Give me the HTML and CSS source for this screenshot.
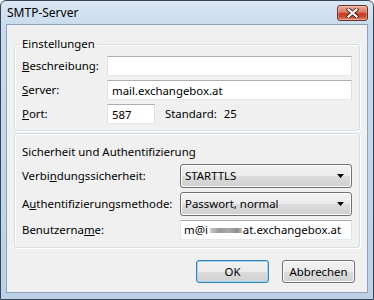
FILE: index.html
```html
<!DOCTYPE html>
<html lang="de">
  <head>
    <meta charset="UTF-8" />
    <meta name="viewport" content="width=device-width, initial-scale=1.0" />
    <title>SMTP-Server</title>
    <link rel="stylesheet" href="styles.css">
  </head>
  <body>
    <div class="window">
      <div class="titlebar">
        <span class="title">SMTP-Server</span>
        <button class="close-btn" title="Schließen">
          <svg width="13" height="10" viewBox="0 0 13 10">
            <path d="M2.5 1.5 L10.5 8.5 M10.5 1.5 L2.5 8.5" stroke="#4a1a12" stroke-width="3.8" stroke-linecap="square" fill="none" />
            <path d="M2.5 1.5 L10.5 8.5 M10.5 1.5 L2.5 8.5" stroke="#fff" stroke-width="2.2" stroke-linecap="square" fill="none" />
          </svg>
        </button>
      </div>

      <div class="client">
        <fieldset class="group">
          <legend>Einstellungen</legend>
          <div class="form-grid settings">
            <label for="desc"><u>B</u>eschreibung:</label>
            <input type="text" class="field" id="desc">

            <label for="server"><u>S</u>erver:</label>
            <input type="text" class="field" id="server" value="mail.exchangebox.at">

            <label for="port"><u>P</u>ort:</label>
            <div class="port-row">
              <input type="text" class="field port" id="port" value="587">
              <span>Standard:</span>
              <span>25</span>
            </div>
          </div>
        </fieldset>

        <div class="group security">
          <div class="caption">Sicherheit und Authentifizierung</div>
          <div class="form-grid auth">
            <label>Verbi<u>n</u>dungssicherheit:</label>
            <div class="dropdown">
              <span>STARTTLS</span>
              <svg class="arrow" width="7" height="4" viewBox="0 0 7 4"><path d="M0 0 H7 L3.5 4 Z" fill="#000" /></svg>
            </div>

            <label>A<u>u</u>thentifizierungsmethode:</label>
            <div class="dropdown">
              <span>Passwort, normal</span>
              <svg class="arrow" width="7" height="4" viewBox="0 0 7 4"><path d="M0 0 H7 L3.5 4 Z" fill="#000" /></svg>
            </div>

            <label>Benutzerna<u>m</u>e:</label>
            <div class="field user">m@i<span class="redacted"></span>at.exchangebox.at</div>
          </div>
        </div>

        <div class="buttons">
          <button class="btn btn-default">OK</button>
          <button class="btn">Abbrechen</button>
        </div>
      </div>
    </div>
  </body>
</html>
```

FILE: styles.css
```css
body {
  margin: 0;
  font-family: "Noto Sans", "Open Sans", sans-serif;
  font-size: 11.4px;
  line-height: 16px;
  color: #000;
  background: #fff;
}

.window {
  width: 374px;
  height: 300px;
  box-sizing: border-box;
  border: 1px solid #34475a;
  border-radius: 6px 6px 0 0;
  background: linear-gradient(#dbe7f4, #c9dbee 24px, #bcd1e7);
  padding: 0 5px 6px 5px;
  display: flex;
  flex-direction: column;
}

.titlebar {
  height: 23px;
  display: flex;
  align-items: center;
  padding-left: 1px;
}

.title {
  color: #000;
  font-size: 12px;
}

.close-btn {
  margin-left: auto;
  align-self: flex-start;
  margin-top: 4px;
  width: 31px;
  height: 16px;
  padding: 0;
  border: 1px solid #6b2e24;
  border-radius: 3px;
  background: linear-gradient(#eaa99a 0%, #dc7a64 45%, #c73e25 50%, #c9482f 75%, #de8c70 100%);
  box-shadow: inset 0 0 0 1px rgba(255, 255, 255, 0.3);
  display: flex;
  align-items: center;
  justify-content: center;
}

.client {
  flex: 1;
  background: #f0f0f0;
  border: 1px solid #8fa4bb;
  padding: 11px 7px 0 7px;
  display: flex;
  flex-direction: column;
}

.group {
  margin: 0;
  border: 1px solid #d5dfe5;
  border-radius: 3px;
  box-shadow: inset 1px 1px 0 #fff, 1px 1px 0 #fff;
  padding: 4px 7px 6px 7px;
  min-width: 0;
}

.group legend {
  padding: 0 2px;
  margin-left: -2px;
}

.form-grid {
  display: grid;
  row-gap: 4px;
  align-items: center;
}

.settings {
  grid-template-columns: 85px 1fr;
}

.auth {
  grid-template-columns: 158px 1fr;
}

.field {
  height: 20px;
  box-sizing: border-box;
  border: 1px solid;
  border-color: #abadb3 #dbdfe6 #e3e9ef #e2e3ea;
  background: #fff;
  padding: 0 4px;
  font: inherit;
  color: #000;
  margin: 0;
  width: 100%;
}

.port-row {
  display: flex;
  align-items: center;
  gap: 10px;
}

.port-row .port {
  width: 48px;
}

.port-row span + span {
  margin-left: -3px;
}

.security {
  margin-top: 2px;
  padding: 10px 7px 7px 7px;
}

.caption {
  margin-bottom: 4px;
}

.dropdown {
  height: 24px;
  box-sizing: border-box;
  border: 1px solid #707070;
  border-radius: 3px;
  background: linear-gradient(#f2f2f2 0%, #ebebeb 50%, #dddddd 50%, #cfcfcf 100%);
  box-shadow: inset 0 0 0 1px #fcfcfc;
  display: flex;
  align-items: center;
  justify-content: space-between;
  padding: 0 7px 0 4px;
}

.user {
  display: flex;
  align-items: center;
  padding-left: 3px;
  white-space: nowrap;
  overflow: hidden;
}

.redacted {
  display: inline-block;
  width: 32px;
  height: 5px;
  margin: 1px 1px 0 2px;
  background: linear-gradient(90deg, #c8c8c8, #9a9a9a 30%, #a8a8a8 60%, #8c8c8c 85%, #bdbdbd);
  filter: blur(0.6px);
}

.buttons {
  display: flex;
  justify-content: flex-end;
  gap: 13px;
  margin-top: 12px;
  padding-right: 5px;
}

.btn {
  width: 73px;
  height: 23px;
  padding: 0;
  border: 1px solid #707070;
  border-radius: 3px;
  background: linear-gradient(#f2f2f2 0%, #ebebeb 50%, #dddddd 50%, #cfcfcf 100%);
  box-shadow: inset 0 0 0 1px #fcfcfc;
  font: inherit;
  color: #000;
}

.btn-default {
  border-color: #3c7fb1;
  box-shadow: inset 0 0 0 1px #9bd8f3;
}
```
